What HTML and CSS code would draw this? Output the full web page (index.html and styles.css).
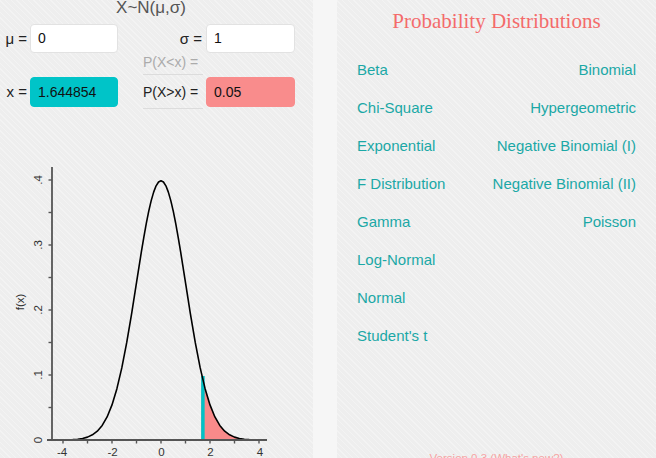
FILE: index.html
```html
<!DOCTYPE html>
<html>
<head>
<meta charset="utf-8">
<link rel="stylesheet" href="styles.css">
</head>
<body>
<div class="screen">
  <section class="calc">
    <div class="calc-title">X~N(μ,σ)</div>
    <div class="form">
      <div class="lbl r1 c1">μ =</div>
      <div class="field r1 c2">0</div>
      <div class="lbl lbl-right r1 c4">σ =</div>
      <div class="field r1 c5">1</div>

      <div class="prob-lt r2 c4">P(X&lt;x) =</div>

      <div class="lbl r3 c1">x =</div>
      <div class="field field-teal r3 c2">1.644854</div>
      <div class="prob-gt r3 c4">P(X&gt;x) =</div>
      <div class="field field-salmon r3 c5">0.05</div>
    </div>
    <svg class="chart" viewBox="0 109 313 349" width="313" height="349">
      <polygon class="tail" points="201.3,440 201.3,372.96 205.1,388.68 210,404.91 214.9,416.94 219.8,425.45 224.7,431.17 229.6,434.85 234.5,437.12 239.4,438.45 244.3,439.2 249.2,439.6 259,440"/>
      <line class="cut" x1="202.9" y1="440" x2="202.9" y2="376"/>
      <polyline class="curve" points="53.2,439.99 58.1,439.96 63,439.92 67.9,439.81 72.8,439.6 77.7,439.2 82.6,438.45 87.5,437.12 92.4,434.85 97.3,431.17 102.2,425.45 107.1,416.94 112,404.91 116.9,388.68 121.8,367.9 126.7,342.68 131.6,313.78 136.5,282.72 138.95,267.04 141.4,251.7 143.85,237.04 146.3,223.41 148.75,211.16 151.2,200.62 153.65,192.1 156.1,185.82 158.55,181.98 161,180.69 163.45,181.98 165.9,185.82 168.35,192.1 170.8,200.62 173.25,211.16 175.7,223.41 178.15,237.04 180.6,251.7 183.05,267.04 185.5,282.72 190.4,313.78 195.3,342.68 200.2,367.9 205.1,388.68 210,404.91 214.9,416.94 219.8,425.45 224.7,431.17 229.6,434.85 234.5,437.12 239.4,438.45 244.3,439.2 249.2,439.6 254.1,439.81 259,439.92 263.9,439.96 266,439.98"/>
      <g class="axis">
        <line x1="52" y1="167" x2="52" y2="440.7"/>
        <line x1="47" y1="440" x2="267" y2="440"/>
        <line x1="48.5" y1="440" x2="52" y2="440"/>
        <line x1="48.5" y1="407.5" x2="52" y2="407.5"/>
        <line x1="48.5" y1="375" x2="52" y2="375"/>
        <line x1="48.5" y1="342.5" x2="52" y2="342.5"/>
        <line x1="48.5" y1="310" x2="52" y2="310"/>
        <line x1="48.5" y1="277.5" x2="52" y2="277.5"/>
        <line x1="48.5" y1="245" x2="52" y2="245"/>
        <line x1="48.5" y1="212.5" x2="52" y2="212.5"/>
        <line x1="48.5" y1="180" x2="52" y2="180"/>
        <line x1="63" y1="440" x2="63" y2="443.5"/>
        <line x1="87.5" y1="440" x2="87.5" y2="443.5"/>
        <line x1="112" y1="440" x2="112" y2="443.5"/>
        <line x1="136.5" y1="440" x2="136.5" y2="443.5"/>
        <line x1="161" y1="440" x2="161" y2="443.5"/>
        <line x1="185.5" y1="440" x2="185.5" y2="443.5"/>
        <line x1="210" y1="440" x2="210" y2="443.5"/>
        <line x1="234.5" y1="440" x2="234.5" y2="443.5"/>
        <line x1="259" y1="440" x2="259" y2="443.5"/>
      </g>
      <g class="ticklabels">
        <text x="62" y="456">-4</text>
        <text x="112.5" y="456">-2</text>
        <text x="161.5" y="456">0</text>
        <text x="210.5" y="456">2</text>
        <text x="260" y="456">4</text>
        <text transform="translate(42 440) rotate(-90)">0</text>
        <text transform="translate(42 375) rotate(-90)">.1</text>
        <text transform="translate(42 310) rotate(-90)">.2</text>
        <text transform="translate(42 245) rotate(-90)">.3</text>
        <text transform="translate(42 180) rotate(-90)">.4</text>
        <text transform="translate(24 302) rotate(-90)">f(x)</text>
      </g>
    </svg>
  </section>
  <div class="divider"></div>
  <section class="menu">
    <h1 class="menu-title">Probability Distributions</h1>
    <ul class="dist-list">
      <li>Beta</li>
      <li class="right">Binomial</li>
      <li>Chi-Square</li>
      <li class="right">Hypergeometric</li>
      <li>Exponential</li>
      <li class="right">Negative Binomial (I)</li>
      <li>F Distribution</li>
      <li class="right">Negative Binomial (II)</li>
      <li>Gamma</li>
      <li class="right">Poisson</li>
      <li>Log-Normal</li>
      <li class="right"></li>
      <li>Normal</li>
      <li class="right"></li>
      <li>Student's t</li>
      <li class="right"></li>
    </ul>
    <div class="version">Version 0.3 (What's new?)</div>
  </section>
</div>
</body>
</html>
```

FILE: styles.css
```css
html, body {
  margin: 0;
  padding: 0;
}
body {
  width: 656px;
  height: 458px;
  overflow: hidden;
  font-family: "Liberation Sans", Arial, sans-serif;
  background: #eeeeee;
}
.screen {
  display: flex;
  width: 656px;
  height: 458px;
}
.calc, .menu {
  background-color: #eeeeee;
  background-image: repeating-linear-gradient(45deg, rgba(255,255,255,0) 0px, rgba(255,255,255,0) 3px, rgba(255,255,255,0.3) 3px, rgba(255,255,255,0.3) 4px);
}
.calc {
  width: 313px;
  display: flex;
  flex-direction: column;
  flex: none;
}
.divider {
  width: 24px;
  flex: none;
  background: #f6f6f6;
}
.menu {
  flex: 1;
  display: flex;
  flex-direction: column;
  padding: 8px 20px 0 20px;
}

/* calculator */
.calc-title {
  margin-top: -2px;
  width: 302px;
  height: 20px;
  line-height: 20px;
  text-align: center;
  font-size: 17px;
  color: #555;
}
.form {
  margin-top: 6px;
  display: grid;
  grid-template-columns: 30px 88px 25px 63px 89px;
  grid-template-rows: 29px 24px 32px;
}
.r1 { grid-row: 1; }
.r2 { grid-row: 2; }
.r3 { grid-row: 3; }
.c1 { grid-column: 1; }
.c2 { grid-column: 2; }
.c4 { grid-column: 4; }
.c5 { grid-column: 5; }
.lbl {
  font-size: 15px;
  color: #222;
  text-align: right;
  padding-right: 3px;
  line-height: 29px;
}
.lbl.r3 { line-height: 30px; }
.lbl-right {
  padding-right: 4px;
}
.field {
  background: #fff;
  border: 1px solid #e2e2e2;
  border-radius: 4px;
  font-size: 14px;
  color: #111;
  padding-left: 7px;
  line-height: 27px;
  box-sizing: border-box;
  height: 29px;
}
.field-teal {
  background: #00c4c8;
  border-color: #00c4c8;
  height: 30px;
  line-height: 28px;
}
.field-salmon {
  background: #f98c8c;
  border-color: #f98c8c;
  height: 30px;
  line-height: 28px;
}
.prob-lt {
  margin-right: 3px;
  font-size: 14px;
  color: #ababab;
  height: 21px;
  line-height: 18px;
  border-bottom: 1px solid #dcdcdc;
}
.prob-gt {
  margin-right: 3px;
  font-size: 14px;
  color: #222;
  line-height: 30px;
  height: 32px;
  box-sizing: border-box;
  border-bottom: 1px solid #dcdcdc;
}
.chart {
  display: block;
}
.tail { fill: #f98a8a; }
.cut { stroke: #00c2c6; stroke-width: 3.5; }
.curve { fill: none; stroke: #000; stroke-width: 1.6; stroke-linejoin: round; }
.axis line { stroke: #555; stroke-width: 1.4; }
.axis line:first-child, .axis line:nth-child(2) { stroke-width: 1.8; }
.ticklabels text {
  font-family: "Liberation Sans", Arial, sans-serif;
  font-size: 11.5px;
  fill: #333;
  text-anchor: middle;
}

/* menu */
.menu-title {
  margin: 0;
  height: 26px;
  line-height: 26px;
  text-align: center;
  font-family: "Liberation Serif", "Times New Roman", serif;
  font-weight: normal;
  font-size: 21px;
  color: #f46b6b;
}
.dist-list {
  list-style: none;
  margin: 17px 0 0 0;
  padding: 0;
  display: grid;
  grid-template-columns: 1fr 1fr;
  grid-auto-rows: 38px;
}
.dist-list li {
  font-size: 15px;
  line-height: 38px;
  color: #1ba8a6;
  white-space: nowrap;
}
.dist-list li.right {
  text-align: right;
}
.version {
  margin-top: auto;
  margin-bottom: -8px;
  text-align: center;
  font-size: 11.5px;
  line-height: 16px;
  color: #f6a3a3;
}
```
